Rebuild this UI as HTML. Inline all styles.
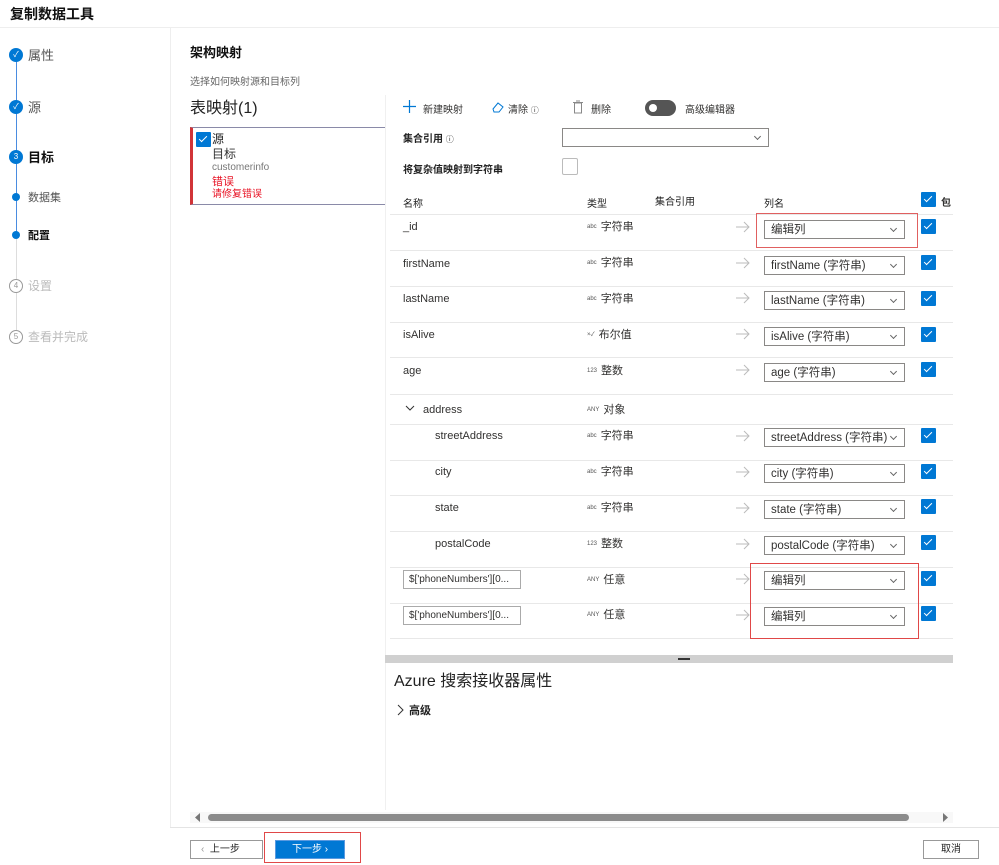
<!DOCTYPE html>
<html><head><meta charset="utf-8"><style>
*{box-sizing:border-box;margin:0;padding:0}
body{width:999px;height:865px;overflow:hidden;background:#fff;font-family:"Liberation Sans","Noto Sans CJK SC",sans-serif;color:#323130;position:relative;font-size:11px}
.a{position:absolute;white-space:nowrap}
.line{position:absolute;background:#e8e8e8;height:1px;left:390px;width:563px}
.dd{position:absolute;left:764px;width:141px;height:19px;border:1px solid #8a8886;font-size:11.5px;padding:0 0 0 6px;color:#323130;background:#fff;line-height:18px}
.dd:after{content:"";position:absolute;right:8px;top:5px;width:4px;height:4px;border-right:1px solid #666;border-bottom:1px solid #666;transform:rotate(45deg)}
.cb{position:absolute;left:921px;width:15px;height:15px;background:#0078d4;border-radius:1px}
.cb:after{content:"";position:absolute;left:5px;top:2px;width:3px;height:7px;border-right:1.6px solid #fff;border-bottom:1.6px solid #fff;transform:rotate(45deg)}
.nm{position:absolute;font-size:11px;color:#323130}
.ty{position:absolute;left:587px;font-size:11px;color:#323130}
.ty small{font-size:6px;color:#555;margin-right:4px;vertical-align:2px}
.step{position:absolute;left:9px;width:14px;height:14px;border-radius:50%;background:#0078d4;color:#fff;font-size:8px;text-align:center;line-height:14px}
.step.o{background:#fff;border:1px solid #999;color:#999;line-height:12px}
.dot{position:absolute;left:12px;width:8px;height:8px;border-radius:50%;background:#0078d4}
</style></head><body>
<div class="a" style="left:10px;top:4px;font-size:14px;font-weight:bold;color:#111">复制数据工具</div>
<div style="position:absolute;left:0;top:27px;width:999px;height:1px;background:#eee"></div>
<div style="position:absolute;left:170px;top:28px;width:1px;height:800px;background:#eee"></div>
<div style="position:absolute;left:16px;top:60px;width:1px;height:175px;background:#4a8ce0"></div>
<div style="position:absolute;left:16px;top:235px;width:1px;height:100px;background:#ddd"></div>
<div class="step" style="top:48px">✓</div><div class="a" style="left:28px;top:45px;font-size:13px;color:#555">属性</div>
<div class="step" style="top:100px">✓</div><div class="a" style="left:28px;top:97px;font-size:13px;color:#555">源</div>
<div class="step" style="top:150px">3</div><div class="a" style="left:28px;top:147px;font-size:13px;font-weight:bold;color:#111">目标</div>
<div class="dot" style="top:193px"></div><div class="a" style="left:28px;top:189px;font-size:11px;color:#555">数据集</div>
<div class="dot" style="top:231px"></div><div class="a" style="left:28px;top:227px;font-size:11px;font-weight:bold;color:#111">配置</div>
<div class="step o" style="top:279px">4</div><div class="a" style="left:28px;top:277px;font-size:12px;color:#bbb">设置</div>
<div class="step o" style="top:330px">5</div><div class="a" style="left:28px;top:328px;font-size:12px;color:#bbb">查看并完成</div>
<div class="a" style="left:190px;top:42px;font-size:13px;font-weight:bold;color:#111">架构映射</div>
<div class="a" style="left:190px;top:73px;font-size:10px;color:#666">选择如何映射源和目标列</div>
<div class="a" style="left:190px;top:98px;font-size:16px;color:#222;line-height:22px">表映射(1)</div>
<div style="position:absolute;left:190px;top:127px;width:196px;height:78px;border:1px solid #8a8aa8;border-left:3px solid #d13438"></div>
<div class="cb" style="left:196px;top:132px"></div>
<div class="a" style="left:212px;top:132px;font-size:12px;color:#222;line-height:15px">源</div>
<div class="a" style="left:212px;top:147px;font-size:12px;color:#333;line-height:15px">目标</div>
<div class="a" style="left:212px;top:162px;font-size:10px;color:#777;line-height:12px">customerinfo</div>
<div class="a" style="left:212px;top:175px;font-size:11px;color:#e81123;line-height:14px">错误</div>
<div class="a" style="left:212px;top:189px;font-size:10px;color:#e81123;line-height:12px">请修复错误</div>
<div style="position:absolute;left:385px;top:95px;width:1px;height:715px;background:#f0f0f0"></div>
<svg class="a" style="left:403px;top:100px" width="13" height="13"><path d="M6.5 0V13M0 6.5H13" stroke="#0078d4" stroke-width="1.2"/></svg>
<div class="a" style="left:423px;top:101px;font-size:10px">新建映射</div>
<svg class="a" style="left:491px;top:101px" width="14" height="12"><path d="M2 8 L7 2 L12 6 L8 11 L3 11 Z" fill="none" stroke="#0078d4"/></svg>
<div class="a" style="left:508px;top:101px;font-size:10px">清除 <span style="font-size:8px">ⓘ</span></div>
<svg class="a" style="left:573px;top:100px" width="10" height="14"><rect x="1.5" y="3" width="7" height="10" fill="none" stroke="#888"/><path d="M0 2.5H10M3 1H7" stroke="#888"/></svg>
<div class="a" style="left:591px;top:101px;font-size:10px">删除</div>
<div style="position:absolute;left:645px;top:100px;width:31px;height:16px;border-radius:8px;background:#555"></div>
<div style="position:absolute;left:649px;top:104px;width:8px;height:8px;border-radius:50%;background:#fff"></div>
<div class="a" style="left:685px;top:101px;font-size:10px">高级编辑器</div>
<div class="a" style="left:403px;top:130px;font-size:10px;font-weight:bold;color:#222">集合引用 <span style="font-size:8px;font-weight:normal">ⓘ</span></div>
<div class="dd" style="left:562px;top:128px;width:207px;height:19px"></div>
<div class="a" style="left:403px;top:161px;font-size:10px;font-weight:bold;color:#222">将复杂值映射到字符串</div>
<div style="position:absolute;left:562px;top:158px;width:16px;height:17px;border:1px solid #bbb;border-radius:2px"></div>
<div class="a" style="left:403px;top:195px;font-size:10px;color:#222">名称</div>
<div class="a" style="left:587px;top:195px;font-size:10px;color:#222">类型</div>
<div class="a" style="left:655px;top:193px;font-size:10px;color:#222">集合引用</div>
<div class="a" style="left:764px;top:195px;font-size:10px;color:#222">列名</div>
<div class="cb" style="top:192px"></div>
<div class="a" style="left:941px;top:194px;font-size:10px;font-weight:bold">包</div>

<div class="line" style="top:214px"></div><div class="line" style="top:250px"></div><div class="line" style="top:286px"></div><div class="line" style="top:322px"></div><div class="line" style="top:357px"></div><div class="line" style="top:394px"></div><div class="line" style="top:424px"></div><div class="line" style="top:460px"></div><div class="line" style="top:495px"></div><div class="line" style="top:531px"></div><div class="line" style="top:567px"></div><div class="line" style="top:603px"></div><div class="line" style="top:638px"></div>

<div class="nm" style="left:403px;top:221px">_id</div><div class="ty" style="top:218px"><small>abc</small>字符串</div>
<div class="nm" style="left:403px;top:258px">firstName</div><div class="ty" style="top:254px"><small>abc</small>字符串</div>
<div class="nm" style="left:403px;top:293px">lastName</div><div class="ty" style="top:290px"><small>abc</small>字符串</div>
<div class="nm" style="left:403px;top:329px">isAlive</div><div class="ty" style="top:326px"><small>×✓</small>布尔值</div>
<div class="nm" style="left:403px;top:365px">age</div><div class="ty" style="top:362px"><small>123</small>整数</div>
<svg class="a" style="left:405px;top:405px" width="10" height="7"><path d="M1 1L5 5L9 1" fill="none" stroke="#333"/></svg>
<div class="nm" style="left:423px;top:404px">address</div><div class="ty" style="top:401px"><small>ANY</small>对象</div>
<div class="nm" style="left:435px;top:430px">streetAddress</div><div class="ty" style="top:427px"><small>abc</small>字符串</div>
<div class="nm" style="left:435px;top:466px">city</div><div class="ty" style="top:463px"><small>abc</small>字符串</div>
<div class="nm" style="left:435px;top:502px">state</div><div class="ty" style="top:499px"><small>abc</small>字符串</div>
<div class="nm" style="left:435px;top:538px">postalCode</div><div class="ty" style="top:535px"><small>123</small>整数</div>
<div style="position:absolute;left:403px;top:570px;width:118px;height:19px;border:1px solid #aaa;font-size:10px;padding:2px 0 0 5px;line-height:14px">$['phoneNumbers'][0...</div><div class="ty" style="top:571px"><small>ANY</small>任意</div>
<div style="position:absolute;left:403px;top:606px;width:118px;height:19px;border:1px solid #aaa;font-size:10px;padding:2px 0 0 5px;line-height:14px">$['phoneNumbers'][0...</div><div class="ty" style="top:606px"><small>ANY</small>任意</div>

<svg class="a" style="left:736px;top:221px" width="14" height="12"><path d="M0 6H13M8 1L13 6L8 11" fill="none" stroke="#bbb"/></svg>
<svg class="a" style="left:736px;top:257px" width="14" height="12"><path d="M0 6H13M8 1L13 6L8 11" fill="none" stroke="#bbb"/></svg>
<svg class="a" style="left:736px;top:292px" width="14" height="12"><path d="M0 6H13M8 1L13 6L8 11" fill="none" stroke="#bbb"/></svg>
<svg class="a" style="left:736px;top:328px" width="14" height="12"><path d="M0 6H13M8 1L13 6L8 11" fill="none" stroke="#bbb"/></svg>
<svg class="a" style="left:736px;top:364px" width="14" height="12"><path d="M0 6H13M8 1L13 6L8 11" fill="none" stroke="#bbb"/></svg>
<svg class="a" style="left:736px;top:430px" width="14" height="12"><path d="M0 6H13M8 1L13 6L8 11" fill="none" stroke="#bbb"/></svg>
<svg class="a" style="left:736px;top:466px" width="14" height="12"><path d="M0 6H13M8 1L13 6L8 11" fill="none" stroke="#bbb"/></svg>
<svg class="a" style="left:736px;top:502px" width="14" height="12"><path d="M0 6H13M8 1L13 6L8 11" fill="none" stroke="#bbb"/></svg>
<svg class="a" style="left:736px;top:538px" width="14" height="12"><path d="M0 6H13M8 1L13 6L8 11" fill="none" stroke="#bbb"/></svg>
<svg class="a" style="left:736px;top:573px" width="14" height="12"><path d="M0 6H13M8 1L13 6L8 11" fill="none" stroke="#bbb"/></svg>
<svg class="a" style="left:736px;top:609px" width="14" height="12"><path d="M0 6H13M8 1L13 6L8 11" fill="none" stroke="#bbb"/></svg>

<div class="dd" style="top:220px">编辑列</div>
<div class="dd" style="top:256px">firstName (字符串)</div>
<div class="dd" style="top:291px">lastName (字符串)</div>
<div class="dd" style="top:327px">isAlive (字符串)</div>
<div class="dd" style="top:363px">age (字符串)</div>
<div class="dd" style="top:428px">streetAddress (字符串)</div>
<div class="dd" style="top:464px">city (字符串)</div>
<div class="dd" style="top:500px">state (字符串)</div>
<div class="dd" style="top:536px">postalCode (字符串)</div>
<div class="dd" style="top:571px">编辑列</div>
<div class="dd" style="top:607px">编辑列</div>
<div style="position:absolute;left:756px;top:213px;width:162px;height:35px;border:1px solid #e06060"></div>
<div style="position:absolute;left:750px;top:563px;width:169px;height:76px;border:1px solid #e04848"></div>
<div class="cb" style="top:219px"></div><div class="cb" style="top:255px"></div><div class="cb" style="top:291px"></div><div class="cb" style="top:327px"></div><div class="cb" style="top:362px"></div><div class="cb" style="top:428px"></div><div class="cb" style="top:464px"></div><div class="cb" style="top:499px"></div><div class="cb" style="top:535px"></div><div class="cb" style="top:571px"></div><div class="cb" style="top:606px"></div>

<div style="position:absolute;left:385px;top:655px;width:568px;height:8px;background:#d0d0d0"></div>
<div style="position:absolute;left:678px;top:658px;width:12px;height:2px;background:#333"></div>
<div class="a" style="left:394px;top:671px;font-size:16px;color:#222;line-height:22px">Azure 搜索接收器属性</div>
<svg class="a" style="left:397px;top:704px" width="7" height="12"><path d="M1 1L6 6L1 11" fill="none" stroke="#333"/></svg>
<div class="a" style="left:409px;top:702px;font-size:11px;font-weight:bold;color:#222">高级</div>
<div style="position:absolute;left:190px;top:812px;width:763px;height:11px;background:#f8f8f8"></div>
<div style="position:absolute;left:208px;top:814px;width:701px;height:7px;border-radius:4px;background:#8c8c8c"></div>
<svg class="a" style="left:195px;top:813px" width="6" height="9"><path d="M5 0V9L0 4.5Z" fill="#777"/></svg>
<svg class="a" style="left:943px;top:813px" width="6" height="9"><path d="M0 0V9L5 4.5Z" fill="#777"/></svg>
<div style="position:absolute;left:170px;top:827px;width:829px;height:1px;background:#e4e4e4"></div>
<div style="position:absolute;left:190px;top:840px;width:73px;height:19px;border:1px solid #999;font-size:10px;padding:0 0 0 10px;color:#222;line-height:17px"><span style="color:#999">‹</span>&nbsp; 上一步</div>
<div style="position:absolute;left:264px;top:832px;width:97px;height:31px;border:1px solid #e04848"></div>
<div style="position:absolute;left:275px;top:840px;width:70px;height:19px;background:#0078d4;border:1px solid #5a9ae0;color:#fff;font-size:10px;padding:0 0 0 16px;line-height:17px">下一步 ›</div>
<div style="position:absolute;left:923px;top:840px;width:56px;height:19px;border:1px solid #999;font-size:10px;padding:0 0 0 17px;color:#222;line-height:17px">取消</div>
</body></html>
